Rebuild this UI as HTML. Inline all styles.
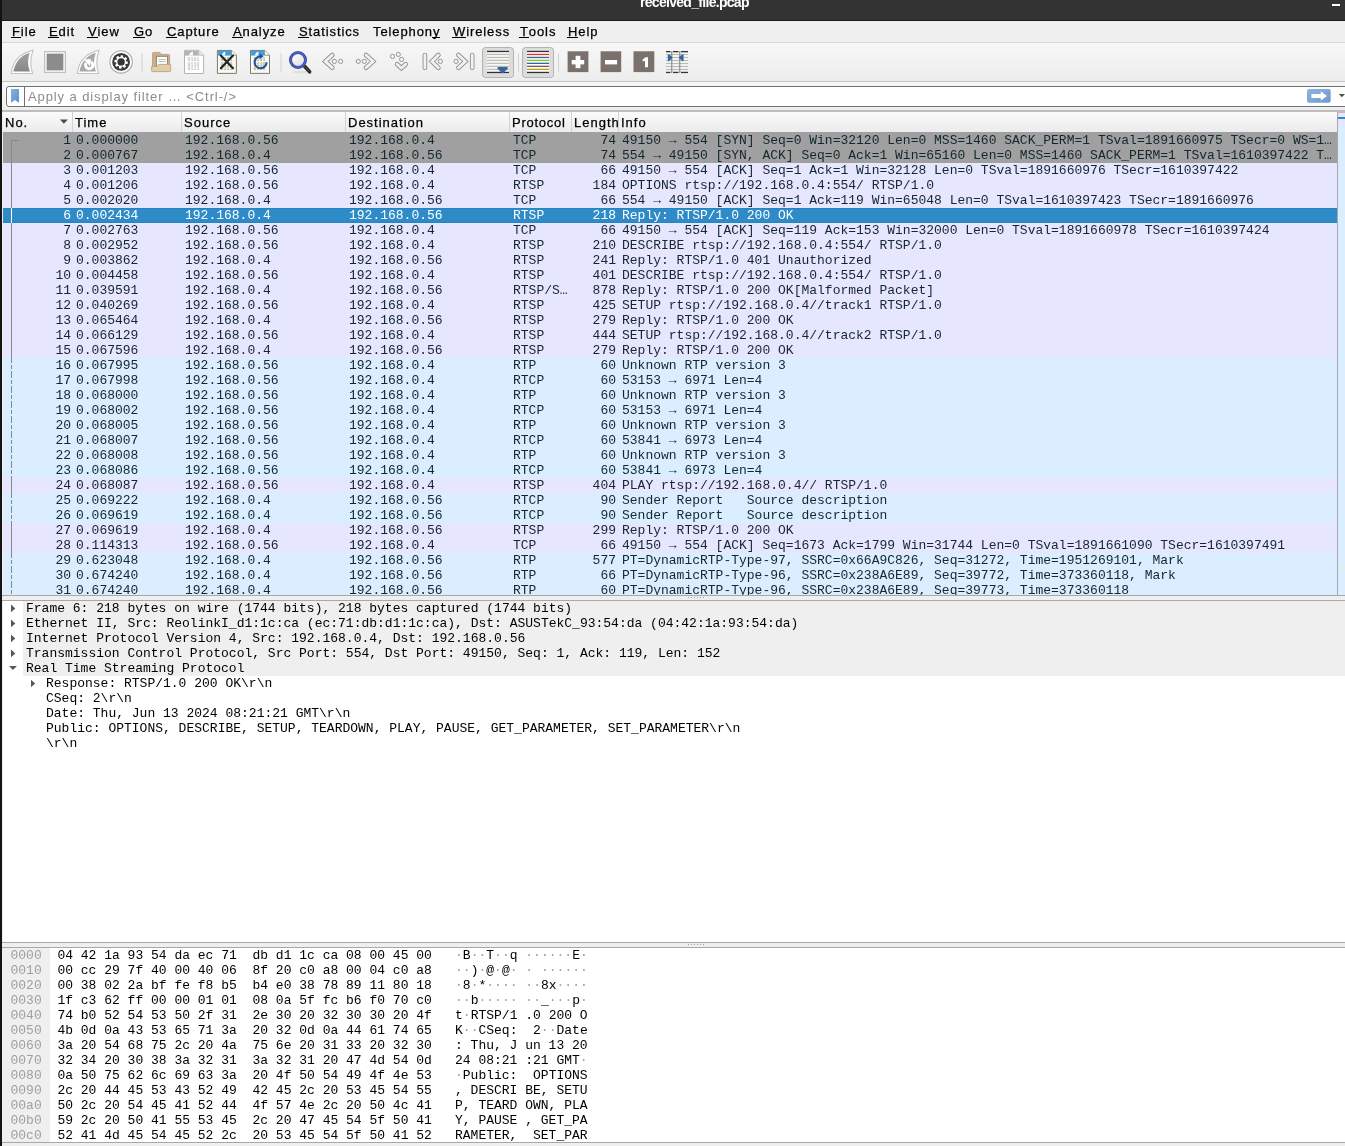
<!DOCTYPE html><html><head><meta charset="utf-8"><style>*{margin:0;padding:0;box-sizing:border-box}
html,body{width:1345px;height:1146px;overflow:hidden;background:#efefef;position:relative;font-family:"Liberation Sans",sans-serif}
.abs{position:absolute}
#lstrip{position:absolute;left:0;top:0;width:2px;height:1146px;background:#141414;z-index:50}
#title{position:absolute;left:0;top:0;width:1345px;height:21px;background:#333333;border-bottom:1px solid #1c1c1c;overflow:hidden}
#title .t{position:absolute;left:640px;top:-6px;font:bold 14px "Liberation Sans",sans-serif;color:#fff;white-space:nowrap;letter-spacing:-0.7px}
#title .mn{position:absolute;left:1332px;top:4px;width:8px;height:2px;background:#fff}
#menu{position:absolute;left:0;top:21px;width:1345px;height:22px;background:#efefef;border-bottom:1px solid #d8d8d8}
#menu span{position:absolute;top:3px;font-size:13px;color:#000;white-space:nowrap;line-height:16px}
#menu u{text-decoration:none;border-bottom:1px solid #000;display:inline-block;line-height:11px;margin-left:-1px;padding-left:1px}
#tb{position:absolute;left:0;top:43px;width:1345px;height:39px;background:linear-gradient(#f7f7f7,#ededed);border-bottom:1px solid #c4c4c4}
#fb{position:absolute;left:0;top:82px;width:1345px;height:28px;background:linear-gradient(#f7f7f7,#eeeeee)}
#fbox{position:absolute;left:6px;top:86px;width:1345px;height:21px;background:#fff;border:1px solid #707070;border-radius:3px}
#fbox .sep{position:absolute;left:17px;top:0;width:1px;height:19px;background:#707070}
#fbox .ph{position:absolute;left:21px;top:2px;font-size:13px;color:#8c8c8c;white-space:nowrap;letter-spacing:0.9px}
#pltop{position:absolute;left:0;top:110px;width:1345px;height:2px;background:#bdbdbd}
#hdr{position:absolute;left:3px;top:112px;width:1334px;height:21px;background:linear-gradient(#fbfbfb,#ebebeb);border-bottom:1px solid #a0a0a0}
#hdr .h{position:absolute;top:0;height:20px;border-right:1px solid #d2d2d2}
#hdr .h span{position:absolute;top:3px;font-size:13px;color:#000;white-space:nowrap}
#pl{position:absolute;left:3px;top:0;width:1334px;height:595px;overflow:hidden}
.pr{position:absolute;left:0;width:1334px;height:15px;font:13px/15px "Liberation Mono",monospace;color:#12272e;white-space:pre}
.pr.syn{background:#a0a0a0}
.pr.tcp{background:#e7e6ff}
.pr.udp{background:#daeeff}
.pr.sel{background:#2f8bc7;color:#fff;border-top:1px solid #2585c2;border-bottom:1px solid #2585c2}
.pr.sel .c{top:-1px}
.pr.sel .rel{top:-1px!important}
.c{position:absolute;top:0}
.no{right:1266px;text-align:right}
.tm{left:73px}
.sr{left:182px}
.ds{left:346px}
.pt{left:510px}
.ln{right:721px;text-align:right}
.inf{left:619px}
#mm{position:absolute;left:1337px;top:112px;width:8px;height:483px;border-left:1px solid #a8a8a8;border-top:1px solid #bdbdbd;background:linear-gradient(to bottom,#e7e6ff 0,#e7e6ff 4px,#2f8bc7 4px,#2f8bc7 6px,#e7e6ff 6px,#e7e6ff 13px,#daeeff 13px,#daeeff 20px,#e3e6ff 20px,#e3e6ff 21px,#daeeff 21px,#daeeff 24px,#e3e6ff 24px,#e3e6ff 25px,#daeeff 25px,#daeeff 453px,#f6e8c0 453px,#f6e8c0 454px,#daeeff 454px)}
#plbot{position:absolute;left:0;top:595px;width:1345px;height:1px;background:#a8a8a8}
#split1{position:absolute;left:0;top:600px;width:1345px;height:1px;background:#a8a8a8}
#det{position:absolute;left:3px;top:601px;width:1342px;height:341px;background:#fff;overflow:hidden}
.dr{position:absolute;left:0;height:15px;font:13px/15px "Liberation Mono",monospace;color:#000;white-space:pre}
.dg{position:absolute;left:20px;top:0;width:1322px;height:75px;background:#efefef}
#split2a{position:absolute;left:0;top:942px;width:1345px;height:1px;background:#a8a8a8}
#split2b{position:absolute;left:0;top:947px;width:1345px;height:1px;background:#a8a8a8}
#hex{position:absolute;left:3px;top:948px;width:1342px;height:194px;background:#fff;overflow:hidden}
#hexbot{position:absolute;left:0;top:1142px;width:1345px;height:1px;background:#a8a8a8}
.hoff{position:absolute;left:0;top:0;width:47px;height:194px;background:#efefef}
.hr{position:absolute;left:0;top:0;height:15px;font:13px/15px "Liberation Mono",monospace;color:#000;white-space:pre}
.ho{position:absolute;left:7.5px;color:#a0a0a0}
.hh{position:absolute;left:54.4px}
.ha{position:absolute;left:452px}
body>*{will-change:transform}
#hdr .h span{letter-spacing:1px}
#menu span{letter-spacing:0.9px}
.rel{position:absolute;left:8px;width:1px;height:15px;background:#7f8a92}
.rel.d{background:repeating-linear-gradient(to bottom,#7f8a92 0 5px,transparent 5px 7px,#7f8a92 7px 11px,transparent 11px 13px,#7f8a92 13px 15px)}
.rel.w{background:#fff}
.ha i{font-style:normal;color:#a0a0a0}
#hdr .h span,#menu span{-webkit-text-stroke:0.25px currentColor}
</style></head><body><div id="lstrip"></div>
<div id="title"><span class="t">received_file.pcap</span><div class="mn"></div></div>
<div id="menu">
<span style="left:12px"><u>F</u>ile</span>
<span style="left:49px"><u>E</u>dit</span>
<span style="left:88px"><u>V</u>iew</span>
<span style="left:134px"><u>G</u>o</span>
<span style="left:167px"><u>C</u>apture</span>
<span style="left:233px"><u>A</u>nalyze</span>
<span style="left:299px"><u>S</u>tatistics</span>
<span style="left:373px">Telephon<u>y</u></span>
<span style="left:453px"><u>W</u>ireless</span>
<span style="left:520px"><u>T</u>ools</span>
<span style="left:568px"><u>H</u>elp</span>
</div>
<div id="tb"></div>
<!--TB--><svg id="tbsvg" style="position:absolute;left:0;top:0" width="700" height="82" viewBox="0 0 700 82">
<defs>
<linearGradient id="fing" x1="0" y1="0" x2="0" y2="1"><stop offset="0" stop-color="#a2a2a2"/><stop offset="1" stop-color="#868686"/></linearGradient>
<linearGradient id="lens" x1="0" y1="0" x2="1" y2="1"><stop offset="0" stop-color="#ffffff"/><stop offset="1" stop-color="#dcdcdc"/></linearGradient>
</defs>
<!-- fin 1 -->
<path d="M11.3,73.5 Q13.5,54.5 33,50.3 Q28.8,62 32.6,73.5 Z" fill="#fff" stroke="#c2c2c2" stroke-width="1.1"/>
<path d="M13.4,71.6 Q16.5,56.5 29.8,52.8 Q26.3,63 29.9,71.6 Z" fill="url(#fing)"/>
<!-- stop -->
<rect x="44.6" y="51.6" width="20.8" height="20.8" fill="#f6f6f6" stroke="#bdbdbd" stroke-width="1.1"/>
<rect x="47" y="54" width="16" height="16" fill="#8c8c8c" stroke="#858585" stroke-width="0.6"/>
<!-- fin 2 restart -->
<path d="M77.3,73.5 Q79.5,54.5 99,50.3 Q94.8,62 98.6,73.5 Z" fill="#fff" stroke="#c2c2c2" stroke-width="1.1"/>
<path d="M79.4,71.6 Q82.5,56.5 95.8,52.8 Q92.3,63 95.9,71.6 Z" fill="#a9a9a9"/>
<path d="M92,62.6 A3.7,3.7 0 1 1 85.6,64" fill="none" stroke="#fff" stroke-width="3" stroke-linecap="round"/>
<path d="M83.8,59.4 L91,59 L90.1,66.4 Z" fill="#fff"/>
<!-- gear -->
<circle cx="121.1" cy="61.9" r="11.2" fill="#fff" stroke="#a8a8a8" stroke-width="1.1"/>
<circle cx="121.1" cy="61.9" r="8.9" fill="#3a3a3a"/>
<g transform="translate(121.1,61.9)" fill="#fff"><circle r="5.0"/><rect x="-1.3" y="-6.7" width="2.6" height="2.6" rx="0.4" transform="rotate(8)"/><rect x="-1.3" y="-6.7" width="2.6" height="2.6" rx="0.4" transform="rotate(53)"/><rect x="-1.3" y="-6.7" width="2.6" height="2.6" rx="0.4" transform="rotate(98)"/><rect x="-1.3" y="-6.7" width="2.6" height="2.6" rx="0.4" transform="rotate(143)"/><rect x="-1.3" y="-6.7" width="2.6" height="2.6" rx="0.4" transform="rotate(188)"/><rect x="-1.3" y="-6.7" width="2.6" height="2.6" rx="0.4" transform="rotate(233)"/><rect x="-1.3" y="-6.7" width="2.6" height="2.6" rx="0.4" transform="rotate(278)"/><rect x="-1.3" y="-6.7" width="2.6" height="2.6" rx="0.4" transform="rotate(323)"/></g>
<circle cx="121.1" cy="61.9" r="3.7" fill="#333"/>
<!-- sep -->
<rect x="141.5" y="53" width="1" height="19" fill="#d2d2d2"/>
<!-- folder -->
<path d="M152.5,71 L152.5,53.5 Q152.5,52.4 153.6,52.4 L159.8,52.4 L161.6,54.4 L168.6,54.4 Q169.6,54.4 169.6,55.4 L169.6,71 Z" fill="#cbb08a" stroke="#bba27c" stroke-width="0.9"/>
<rect x="156.4" y="56.3" width="11" height="11" fill="#fff" stroke="#7b7f7f" stroke-width="0.9"/>
<rect x="158.4" y="59" width="7.4" height="0.9" fill="#b5bab2"/>
<rect x="158.4" y="61" width="7.4" height="0.9" fill="#b5bab2"/>
<path d="M151.6,66.3 L156.8,66.3 L158.8,64.4 L170.6,64.4 L170.6,70.8 Q170.6,71.6 169.8,71.6 L152.4,71.6 Q151.6,71.6 151.6,70.8 Z" fill="#e2cdab" stroke="#bca47e" stroke-width="0.9"/>
<!-- doc grey -->
<path d="M184.5,50.3 L198.8,50.3 L203.6,55.2 L203.6,73.5 L184.5,73.5 Z" fill="#fff" stroke="#b4b4b4" stroke-width="1"/>
<path d="M185,50.8 L198.6,50.8 L198.6,55.6 L185,55.6 Z" fill="#b3b3b3"/>
<path d="M188.8,55.6 Q190,52 193,51.5 L192.8,55.6 Z" fill="#fff"/>
<path d="M198.8,50.3 L198.8,55.2 L203.6,55.2" fill="#e8e8e8" stroke="#b4b4b4" stroke-width="0.8"/>
<g fill="#c4c4c4" font-family="Liberation Mono" font-size="5" font-weight="bold"><text x="187.6" y="60.8">0101</text><text x="187.6" y="65.6">0110</text><text x="187.6" y="70.4">0111</text></g>
<!-- doc X -->
<path d="M217.4,50.4 L231.6,50.4 L236.4,55.2 L236.4,73.4 L217.4,73.4 Z" fill="#fafaee" stroke="#7a7a74" stroke-width="1"/>
<path d="M218,51 L231.4,51 L231.4,55.6 L218,55.6 Z" fill="#3b9fe0"/>
<path d="M221.5,55.6 Q222.6,52.3 225.4,51.6 L225,55.6 Z" fill="#fff"/>
<path d="M231.6,50.4 L231.6,55.2 L236.4,55.2" fill="#fff" stroke="#7a7a74" stroke-width="0.8"/>
<g fill="#a8a8a0" font-family="Liberation Mono" font-size="5" font-weight="bold"><text x="220.6" y="60.8">0101</text><text x="220.6" y="65.6">0110</text><text x="220.6" y="70.4">0111</text></g>
<path d="M220.8,55.6 L233,68.2 M233,55.6 L220.8,68.2" stroke="#252525" stroke-width="2.2" stroke-linecap="round"/>
<!-- doc reload -->
<path d="M250.5,50.4 L264.7,50.4 L269.5,55.2 L269.5,73.4 L250.5,73.4 Z" fill="#fafaee" stroke="#7a7a74" stroke-width="1"/>
<path d="M251.1,51 L264.5,51 L264.5,55.6 L251.1,55.6 Z" fill="#3b9fe0"/>
<path d="M254.6,55.6 Q255.7,52.3 258.5,51.6 L258.1,55.6 Z" fill="#fff"/>
<path d="M264.7,50.4 L264.7,55.2 L269.5,55.2" fill="#fff" stroke="#7a7a74" stroke-width="0.8"/>
<g fill="#a8a8a0" font-family="Liberation Mono" font-size="5" font-weight="bold"><text x="253.6" y="60.8">0101</text><text x="253.6" y="65.6">0110</text><text x="253.6" y="70.4">0111</text></g>
<path d="M266.6,62.3 A6,6 0 1 1 260.3,56.3" fill="none" stroke="#1c4f9c" stroke-width="2"/>
<path d="M259.6,53.4 L263.6,56.2 L259.6,59 Z" fill="#1c4f9c"/>
<!-- sep -->
<rect x="280.5" y="53" width="1" height="19" fill="#d2d2d2"/>
<!-- magnifier -->
<ellipse cx="300" cy="72" rx="8" ry="1.5" fill="#000" opacity="0.06"/>
<path d="M304.6,66.2 L309.6,71.8" stroke="#2a2a2a" stroke-width="3.6" stroke-linecap="round"/>
<path d="M304.9,66.6 L309.2,71.3" stroke="#8a8270" stroke-width="1" stroke-dasharray="0.8 0.8"/>
<circle cx="298" cy="60" r="6.1" fill="url(#lens)"/>
<circle cx="298" cy="60" r="7.5" fill="none" stroke="#2f4ea8" stroke-width="3"/>
<circle cx="298" cy="60" r="7.4" fill="none" stroke="#6a64cc" stroke-width="1"/>
<!-- back / fwd -->
<g fill="none" stroke-linecap="round" stroke-linejoin="miter">
<path d="M332.3,55 L325.3,61.4 L332.3,67.8" stroke="#8e8e8e" stroke-width="4.6"/>
<path d="M366,55 L373.1,61.4 L366,67.8" stroke="#8e8e8e" stroke-width="4.6"/>
<path d="M397.1,64.3 L401.4,68.2 L405.7,64.3" stroke="#8e8e8e" stroke-width="4.6"/>
<path d="M438.4,55 L431.9,61.4 L438.4,67.8" stroke="#8e8e8e" stroke-width="4.6"/>
<path d="M458.4,55 L465.4,61.4 L458.4,67.8" stroke="#8e8e8e" stroke-width="4.6"/>
<path d="M424.9,55 L424.9,67.8" stroke="#8e8e8e" stroke-width="4.6"/>
<path d="M472.2,55 L472.2,67.8" stroke="#8e8e8e" stroke-width="4.6"/>
<path d="M332.3,55 L325.3,61.4 L332.3,67.8" stroke="#f2f2f2" stroke-width="2.8"/>
<path d="M366,55 L373.1,61.4 L366,67.8" stroke="#f2f2f2" stroke-width="2.8"/>
<path d="M397.1,64.3 L401.4,68.2 L405.7,64.3" stroke="#f2f2f2" stroke-width="2.8"/>
<path d="M438.4,55 L431.9,61.4 L438.4,67.8" stroke="#f2f2f2" stroke-width="2.8"/>
<path d="M458.4,55 L465.4,61.4 L458.4,67.8" stroke="#f2f2f2" stroke-width="2.8"/>
<path d="M424.9,55 L424.9,67.8" stroke="#f2f2f2" stroke-width="2.8"/>
<path d="M472.2,55 L472.2,67.8" stroke="#f2f2f2" stroke-width="2.8"/>
</g>
<g fill="#f6f6f6" stroke="#8a8a8a" stroke-width="0.9">
<circle cx="334.4" cy="61.4" r="2.1"/><circle cx="340.6" cy="61.4" r="2.1"/>
<circle cx="358.3" cy="61.4" r="2.1"/><circle cx="364.3" cy="61.4" r="2.1"/>
<circle cx="392.5" cy="56.4" r="2.1"/><circle cx="398.3" cy="54.4" r="2.1"/><circle cx="401.6" cy="59.4" r="2.1"/>
<circle cx="440.4" cy="61.4" r="2.1"/><circle cx="456.1" cy="61.4" r="2.1"/>
</g>
<!-- autoscroll pressed -->
<rect x="482.5" y="47.5" width="31" height="30" rx="3" fill="#dcdcdc" stroke="#b3b3b3" stroke-width="1"/>
<rect x="486.8" y="50.7" width="22.3" height="22.3" fill="#f6f6f4"/>
<g fill="#b9bbb0"><rect x="487" y="53.9" width="22" height="1.1"/><rect x="487" y="56.9" width="22" height="1.1"/><rect x="487" y="59.8" width="22" height="1.1"/><rect x="487" y="62.8" width="22" height="1.1"/><rect x="487" y="65.8" width="22" height="1.1"/><rect x="487" y="68.8" width="22" height="1.1"/></g>
<rect x="487" y="50.8" width="22" height="1.3" fill="#2e3436"/>
<rect x="487" y="71.8" width="22" height="1.3" fill="#2e3436"/>
<path d="M498.3,68.1 L506.9,68.1 L502.6,72.3 Z" fill="#3465a4" stroke="#3465a4" stroke-width="2" stroke-linejoin="round"/>
<rect x="518" y="53" width="1" height="19" fill="#d2d2d2"/>
<!-- colorize pressed -->
<rect x="522.5" y="47.5" width="31" height="30" rx="3" fill="#dcdcdc" stroke="#b3b3b3" stroke-width="1"/>
<rect x="527" y="50.7" width="22.2" height="22.3" fill="#fdfdfa"/>
<rect x="527" y="50.8" width="22" height="1.3" fill="#2e3436"/>
<rect x="527" y="53.8" width="22" height="1.3" fill="#ef2929"/>
<rect x="527" y="56.8" width="22" height="1.3" fill="#3465a4"/>
<rect x="527" y="59.7" width="22" height="1.3" fill="#73d216"/>
<rect x="527" y="62.7" width="22" height="1.3" fill="#3465a4"/>
<rect x="527" y="65.7" width="22" height="1.3" fill="#75507b"/>
<rect x="527" y="68.7" width="22" height="1.3" fill="#c4a000"/>
<rect x="527" y="71.8" width="22" height="1.3" fill="#2e3436"/>
<rect x="558" y="53" width="1" height="19" fill="#d2d2d2"/>
<!-- zoom -->
<rect x="567.6" y="51.3" width="20.8" height="20.8" fill="#7a716c"/>
<rect x="571.7" y="60" width="12.5" height="4.4" fill="#fff"/>
<rect x="575.6" y="55.8" width="4.8" height="12.4" fill="#fff"/>
<rect x="600.6" y="51.3" width="20.6" height="20.8" fill="#7a716c"/>
<rect x="605" y="60" width="12.1" height="4.4" fill="#fff"/>
<rect x="633.5" y="51.3" width="20.8" height="20.8" fill="#7a716c"/>
<path d="M642.6,59.4 L645.6,57.2 L648,57.2 L648,67.2 L645,67.2 L645,60.8 L642.6,61.6 Z" fill="#fff"/>
<!-- resize cols -->
<g fill="#b9bbb0"><rect x="666" y="54" width="22" height="1"/><rect x="666" y="57" width="22" height="1"/><rect x="666" y="60" width="22" height="1"/><rect x="666" y="63" width="22" height="1"/><rect x="666" y="66" width="22" height="1"/><rect x="666" y="69" width="22" height="1"/></g>
<rect x="666" y="51" width="22" height="1.3" fill="#2e3436"/>
<rect x="666" y="71.8" width="22" height="1.3" fill="#2e3436"/>
<g fill="#fafafa"><rect x="670.5" y="50.6" width="2.5" height="1.9"/><rect x="678.5" y="50.6" width="2.5" height="1.9"/><rect x="670.5" y="71.6" width="2.5" height="1.9"/><rect x="678.5" y="71.6" width="2.5" height="1.9"/></g>
<rect x="671.2" y="51" width="1.1" height="22" fill="#888a85"/>
<rect x="679.2" y="51" width="1.1" height="22" fill="#888a85"/>
<path d="M668.6,54.9 L671.8,57.6 L668.6,60.4 Z" fill="#3465a4" stroke="#3465a4" stroke-width="1.5" stroke-linejoin="round"/>
<path d="M682.8,54.9 L679.6,57.6 L682.8,60.4 Z" fill="#3465a4" stroke="#3465a4" stroke-width="1.5" stroke-linejoin="round"/>
</svg>
<!--/TB-->
<div id="fb"></div>
<div id="fbox"><div class="sep"></div><svg style="position:absolute;left:3px;top:1px" width="10" height="16"><defs><linearGradient id="bmg" x1="0" y1="0" x2="1" y2="1"><stop offset="0" stop-color="#86b2e4"/><stop offset="1" stop-color="#5a90cf"/></linearGradient></defs><path d="M1,1 L9,1 L9,14.8 L5,12 L1,14.8 Z" fill="url(#bmg)"/></svg><span class="ph">Apply a display filter … &lt;Ctrl-/&gt;</span></div>
<svg style="position:absolute;left:1300px;top:84px" width="45" height="24"><defs><linearGradient id="apg" x1="0" y1="0" x2="1" y2="1"><stop offset="0" stop-color="#8fb4de"/><stop offset="1" stop-color="#6a9bd0"/></linearGradient></defs>
<rect x="7" y="4.9" width="23.7" height="13.9" rx="2" fill="url(#apg)"/>
<path d="M11.4,9.9 L20.8,9.9 L20.8,7.3 L27,11.9 L20.8,16.4 L20.8,13.9 L11.4,13.9 Z" fill="#fff"/>
<path d="M38.8,10 L45,10 L41.9,13.3 Z" fill="#4e4e4e"/></svg>
<div id="pltop"></div>
<div id="hdr">
<div class="h" style="left:0;width:70px"><span style="left:2px">No.</span><svg style="position:absolute;left:56px;top:6.7px" width="10" height="6"><path d="M1,0.6 L8.8,0.6 L4.9,4.8 Z" fill="#4a4a4a"/></svg></div>
<div class="h" style="left:70px;width:109px"><span style="left:2px">Time</span></div>
<div class="h" style="left:179px;width:164px"><span style="left:2px">Source</span></div>
<div class="h" style="left:343px;width:164px"><span style="left:2px">Destination</span></div>
<div class="h" style="left:507px;width:62px"><span style="left:2px;letter-spacing:0.75px">Protocol</span></div>
<div class="h" style="left:569px;width:47px"><span style="left:2px">Length</span></div>
<div class="h" style="left:616px;width:718px;border-right:0"><span style="left:2px">Info</span></div>
</div>
<div id="mm"></div>
<div id="plbot"></div>
<div id="split1"></div><div id="dots1"><div style="position:absolute;left:688px;top:597px;width:1px;height:1px;background:#a0a0a0"></div><div style="position:absolute;left:691px;top:597px;width:1px;height:1px;background:#a0a0a0"></div><div style="position:absolute;left:694px;top:597px;width:1px;height:1px;background:#a0a0a0"></div><div style="position:absolute;left:697px;top:597px;width:1px;height:1px;background:#a0a0a0"></div><div style="position:absolute;left:700px;top:597px;width:1px;height:1px;background:#a0a0a0"></div><div style="position:absolute;left:703px;top:597px;width:1px;height:1px;background:#a0a0a0"></div></div>
<div id="det">
<div class="dg"></div>
<svg style="position:absolute;left:0;top:0" width="40" height="90" viewBox="3 601 40 90">
<g fill="#585858"><path d="M11,604.6 L15.3,608.4 L11,612.2 Z"/><path d="M11,619.6 L15.3,623.4 L11,627.2 Z"/><path d="M11,634.6 L15.3,638.4 L11,642.2 Z"/><path d="M11,649.6 L15.3,653.4 L11,657.2 Z"/>
<path d="M9,666 L16.9,666 L12.95,670.1 Z"/><path d="M31,679.8 L35.2,683.5 L31,687.2 Z"/></g></svg>
<div class="dr" style="top:0;left:23px">Frame 6: 218 bytes on wire (1744 bits), 218 bytes captured (1744 bits)</div>
<div class="dr" style="top:15px;left:23px">Ethernet II, Src: ReolinkI_d1:1c:ca (ec:71:db:d1:1c:ca), Dst: ASUSTekC_93:54:da (04:42:1a:93:54:da)</div>
<div class="dr" style="top:30px;left:23px">Internet Protocol Version 4, Src: 192.168.0.4, Dst: 192.168.0.56</div>
<div class="dr" style="top:45px;left:23px">Transmission Control Protocol, Src Port: 554, Dst Port: 49150, Seq: 1, Ack: 119, Len: 152</div>
<div class="dr" style="top:60px;left:23px">Real Time Streaming Protocol</div>
<div class="dr" style="top:75px;left:43px">Response: RTSP/1.0 200 OK\r\n</div>
<div class="dr" style="top:90px;left:43px">CSeq: 2\r\n</div>
<div class="dr" style="top:105px;left:43px">Date: Thu, Jun 13 2024 08:21:21 GMT\r\n</div>
<div class="dr" style="top:120px;left:43px">Public: OPTIONS, DESCRIBE, SETUP, TEARDOWN, PLAY, PAUSE, GET_PARAMETER, SET_PARAMETER\r\n</div>
<div class="dr" style="top:135px;left:43px">\r\n</div>
</div>
<div id="split2a"></div>
<div id="split2b"></div><div id="dots2"><div style="position:absolute;left:688px;top:944px;width:1px;height:1px;background:#a0a0a0"></div><div style="position:absolute;left:691px;top:944px;width:1px;height:1px;background:#a0a0a0"></div><div style="position:absolute;left:694px;top:944px;width:1px;height:1px;background:#a0a0a0"></div><div style="position:absolute;left:697px;top:944px;width:1px;height:1px;background:#a0a0a0"></div><div style="position:absolute;left:700px;top:944px;width:1px;height:1px;background:#a0a0a0"></div><div style="position:absolute;left:703px;top:944px;width:1px;height:1px;background:#a0a0a0"></div></div>
<div id="hexbot"></div>
<div id="pl"><div class="pr syn" style="top:133px"><span class="c no">1</span><span class="c tm">0.000000</span><span class="c sr">192.168.0.56</span><span class="c ds">192.168.0.4</span><span class="c pt">TCP</span><span class="c ln">74</span><span class="c inf">49150 → 554 [SYN] Seq=0 Win=32120 Len=0 MSS=1460 SACK_PERM=1 TSval=1891660975 TSecr=0 WS=1…</span><div style="position:absolute;left:8px;top:7px;width:8px;height:8px;border-left:1px solid #7f8a92;border-top:1px solid #7f8a92"></div></div><div class="pr syn" style="top:148px"><span class="c no">2</span><span class="c tm">0.000767</span><span class="c sr">192.168.0.4</span><span class="c ds">192.168.0.56</span><span class="c pt">TCP</span><span class="c ln">74</span><span class="c inf">554 → 49150 [SYN, ACK] Seq=0 Ack=1 Win=65160 Len=0 MSS=1460 SACK_PERM=1 TSval=1610397422 T…</span><div class="rel" style="top:0"></div></div><div class="pr tcp" style="top:163px"><span class="c no">3</span><span class="c tm">0.001203</span><span class="c sr">192.168.0.56</span><span class="c ds">192.168.0.4</span><span class="c pt">TCP</span><span class="c ln">66</span><span class="c inf">49150 → 554 [ACK] Seq=1 Ack=1 Win=32128 Len=0 TSval=1891660976 TSecr=1610397422</span><div class="rel" style="top:0"></div></div><div class="pr tcp" style="top:178px"><span class="c no">4</span><span class="c tm">0.001206</span><span class="c sr">192.168.0.56</span><span class="c ds">192.168.0.4</span><span class="c pt">RTSP</span><span class="c ln">184</span><span class="c inf">OPTIONS rtsp://192.168.0.4:554/ RTSP/1.0</span><div class="rel" style="top:0"></div></div><div class="pr tcp" style="top:193px"><span class="c no">5</span><span class="c tm">0.002020</span><span class="c sr">192.168.0.4</span><span class="c ds">192.168.0.56</span><span class="c pt">TCP</span><span class="c ln">66</span><span class="c inf">554 → 49150 [ACK] Seq=1 Ack=119 Win=65048 Len=0 TSval=1610397423 TSecr=1891660976</span><div class="rel" style="top:0"></div></div><div class="pr sel" style="top:208px"><span class="c no">6</span><span class="c tm">0.002434</span><span class="c sr">192.168.0.4</span><span class="c ds">192.168.0.56</span><span class="c pt">RTSP</span><span class="c ln">218</span><span class="c inf">Reply: RTSP/1.0 200 OK</span><div class="rel w" style="top:0"></div></div><div class="pr tcp" style="top:223px"><span class="c no">7</span><span class="c tm">0.002763</span><span class="c sr">192.168.0.56</span><span class="c ds">192.168.0.4</span><span class="c pt">TCP</span><span class="c ln">66</span><span class="c inf">49150 → 554 [ACK] Seq=119 Ack=153 Win=32000 Len=0 TSval=1891660978 TSecr=1610397424</span><div class="rel" style="top:0"></div></div><div class="pr tcp" style="top:238px"><span class="c no">8</span><span class="c tm">0.002952</span><span class="c sr">192.168.0.56</span><span class="c ds">192.168.0.4</span><span class="c pt">RTSP</span><span class="c ln">210</span><span class="c inf">DESCRIBE rtsp://192.168.0.4:554/ RTSP/1.0</span><div class="rel" style="top:0"></div></div><div class="pr tcp" style="top:253px"><span class="c no">9</span><span class="c tm">0.003862</span><span class="c sr">192.168.0.4</span><span class="c ds">192.168.0.56</span><span class="c pt">RTSP</span><span class="c ln">241</span><span class="c inf">Reply: RTSP/1.0 401 Unauthorized</span><div class="rel" style="top:0"></div></div><div class="pr tcp" style="top:268px"><span class="c no">10</span><span class="c tm">0.004458</span><span class="c sr">192.168.0.56</span><span class="c ds">192.168.0.4</span><span class="c pt">RTSP</span><span class="c ln">401</span><span class="c inf">DESCRIBE rtsp://192.168.0.4:554/ RTSP/1.0</span><div class="rel" style="top:0"></div></div><div class="pr tcp" style="top:283px"><span class="c no">11</span><span class="c tm">0.039591</span><span class="c sr">192.168.0.4</span><span class="c ds">192.168.0.56</span><span class="c pt">RTSP/S…</span><span class="c ln">878</span><span class="c inf">Reply: RTSP/1.0 200 OK[Malformed Packet]</span><div class="rel" style="top:0"></div></div><div class="pr tcp" style="top:298px"><span class="c no">12</span><span class="c tm">0.040269</span><span class="c sr">192.168.0.56</span><span class="c ds">192.168.0.4</span><span class="c pt">RTSP</span><span class="c ln">425</span><span class="c inf">SETUP rtsp://192.168.0.4//track1 RTSP/1.0</span><div class="rel" style="top:0"></div></div><div class="pr tcp" style="top:313px"><span class="c no">13</span><span class="c tm">0.065464</span><span class="c sr">192.168.0.4</span><span class="c ds">192.168.0.56</span><span class="c pt">RTSP</span><span class="c ln">279</span><span class="c inf">Reply: RTSP/1.0 200 OK</span><div class="rel" style="top:0"></div></div><div class="pr tcp" style="top:328px"><span class="c no">14</span><span class="c tm">0.066129</span><span class="c sr">192.168.0.56</span><span class="c ds">192.168.0.4</span><span class="c pt">RTSP</span><span class="c ln">444</span><span class="c inf">SETUP rtsp://192.168.0.4//track2 RTSP/1.0</span><div class="rel" style="top:0"></div></div><div class="pr tcp" style="top:343px"><span class="c no">15</span><span class="c tm">0.067596</span><span class="c sr">192.168.0.4</span><span class="c ds">192.168.0.56</span><span class="c pt">RTSP</span><span class="c ln">279</span><span class="c inf">Reply: RTSP/1.0 200 OK</span><div class="rel" style="top:0"></div></div><div class="pr udp" style="top:358px"><span class="c no">16</span><span class="c tm">0.067995</span><span class="c sr">192.168.0.56</span><span class="c ds">192.168.0.4</span><span class="c pt">RTP</span><span class="c ln">60</span><span class="c inf">Unknown RTP version 3</span><div class="rel d" style="top:0"></div></div><div class="pr udp" style="top:373px"><span class="c no">17</span><span class="c tm">0.067998</span><span class="c sr">192.168.0.56</span><span class="c ds">192.168.0.4</span><span class="c pt">RTCP</span><span class="c ln">60</span><span class="c inf">53153 → 6971 Len=4</span><div class="rel d" style="top:0"></div></div><div class="pr udp" style="top:388px"><span class="c no">18</span><span class="c tm">0.068000</span><span class="c sr">192.168.0.56</span><span class="c ds">192.168.0.4</span><span class="c pt">RTP</span><span class="c ln">60</span><span class="c inf">Unknown RTP version 3</span><div class="rel d" style="top:0"></div></div><div class="pr udp" style="top:403px"><span class="c no">19</span><span class="c tm">0.068002</span><span class="c sr">192.168.0.56</span><span class="c ds">192.168.0.4</span><span class="c pt">RTCP</span><span class="c ln">60</span><span class="c inf">53153 → 6971 Len=4</span><div class="rel d" style="top:0"></div></div><div class="pr udp" style="top:418px"><span class="c no">20</span><span class="c tm">0.068005</span><span class="c sr">192.168.0.56</span><span class="c ds">192.168.0.4</span><span class="c pt">RTP</span><span class="c ln">60</span><span class="c inf">Unknown RTP version 3</span><div class="rel d" style="top:0"></div></div><div class="pr udp" style="top:433px"><span class="c no">21</span><span class="c tm">0.068007</span><span class="c sr">192.168.0.56</span><span class="c ds">192.168.0.4</span><span class="c pt">RTCP</span><span class="c ln">60</span><span class="c inf">53841 → 6973 Len=4</span><div class="rel d" style="top:0"></div></div><div class="pr udp" style="top:448px"><span class="c no">22</span><span class="c tm">0.068008</span><span class="c sr">192.168.0.56</span><span class="c ds">192.168.0.4</span><span class="c pt">RTP</span><span class="c ln">60</span><span class="c inf">Unknown RTP version 3</span><div class="rel d" style="top:0"></div></div><div class="pr udp" style="top:463px"><span class="c no">23</span><span class="c tm">0.068086</span><span class="c sr">192.168.0.56</span><span class="c ds">192.168.0.4</span><span class="c pt">RTCP</span><span class="c ln">60</span><span class="c inf">53841 → 6973 Len=4</span><div class="rel d" style="top:0"></div></div><div class="pr tcp" style="top:478px"><span class="c no">24</span><span class="c tm">0.068087</span><span class="c sr">192.168.0.56</span><span class="c ds">192.168.0.4</span><span class="c pt">RTSP</span><span class="c ln">404</span><span class="c inf">PLAY rtsp://192.168.0.4// RTSP/1.0</span><div class="rel" style="top:0"></div></div><div class="pr udp" style="top:493px"><span class="c no">25</span><span class="c tm">0.069222</span><span class="c sr">192.168.0.4</span><span class="c ds">192.168.0.56</span><span class="c pt">RTCP</span><span class="c ln">90</span><span class="c inf">Sender Report   Source description</span><div class="rel d" style="top:0"></div></div><div class="pr udp" style="top:508px"><span class="c no">26</span><span class="c tm">0.069619</span><span class="c sr">192.168.0.4</span><span class="c ds">192.168.0.56</span><span class="c pt">RTCP</span><span class="c ln">90</span><span class="c inf">Sender Report   Source description</span><div class="rel d" style="top:0"></div></div><div class="pr tcp" style="top:523px"><span class="c no">27</span><span class="c tm">0.069619</span><span class="c sr">192.168.0.4</span><span class="c ds">192.168.0.56</span><span class="c pt">RTSP</span><span class="c ln">299</span><span class="c inf">Reply: RTSP/1.0 200 OK</span><div class="rel" style="top:0"></div></div><div class="pr tcp" style="top:538px"><span class="c no">28</span><span class="c tm">0.114313</span><span class="c sr">192.168.0.56</span><span class="c ds">192.168.0.4</span><span class="c pt">TCP</span><span class="c ln">66</span><span class="c inf">49150 → 554 [ACK] Seq=1673 Ack=1799 Win=31744 Len=0 TSval=1891661090 TSecr=1610397491</span><div class="rel" style="top:0"></div></div><div class="pr udp" style="top:553px"><span class="c no">29</span><span class="c tm">0.623048</span><span class="c sr">192.168.0.4</span><span class="c ds">192.168.0.56</span><span class="c pt">RTP</span><span class="c ln">577</span><span class="c inf">PT=DynamicRTP-Type-97, SSRC=0x66A9C826, Seq=31272, Time=1951269101, Mark</span><div class="rel d" style="top:0"></div></div><div class="pr udp" style="top:568px"><span class="c no">30</span><span class="c tm">0.674240</span><span class="c sr">192.168.0.4</span><span class="c ds">192.168.0.56</span><span class="c pt">RTP</span><span class="c ln">66</span><span class="c inf">PT=DynamicRTP-Type-96, SSRC=0x238A6E89, Seq=39772, Time=373360118, Mark</span><div class="rel d" style="top:0"></div></div><div class="pr udp" style="top:583px"><span class="c no">31</span><span class="c tm">0.674240</span><span class="c sr">192.168.0.4</span><span class="c ds">192.168.0.56</span><span class="c pt">RTP</span><span class="c ln">60</span><span class="c inf">PT=DynamicRTP-Type-96, SSRC=0x238A6E89, Seq=39773, Time=373360118</span><div class="rel d" style="top:0"></div></div></div><div id="hex"><div class="hoff"></div><div class="hr" style="top:0px"><span class="ho">0000</span><span class="hh">04 42 1a 93 54 da ec 71  db d1 1c ca 08 00 45 00</span><span class="ha"><i>·</i>B<i>·</i><i>·</i>T<i>·</i><i>·</i>q <i>·</i><i>·</i><i>·</i><i>·</i><i>·</i><i>·</i>E<i>·</i></span></div><div class="hr" style="top:15px"><span class="ho">0010</span><span class="hh">00 cc 29 7f 40 00 40 06  8f 20 c0 a8 00 04 c0 a8</span><span class="ha"><i>·</i><i>·</i>)<i>·</i>@<i>·</i>@<i>·</i> <i>·</i> <i>·</i><i>·</i><i>·</i><i>·</i><i>·</i><i>·</i></span></div><div class="hr" style="top:30px"><span class="ho">0020</span><span class="hh">00 38 02 2a bf fe f8 b5  b4 e0 38 78 89 11 80 18</span><span class="ha"><i>·</i>8<i>·</i>*<i>·</i><i>·</i><i>·</i><i>·</i> <i>·</i><i>·</i>8x<i>·</i><i>·</i><i>·</i><i>·</i></span></div><div class="hr" style="top:45px"><span class="ho">0030</span><span class="hh">1f c3 62 ff 00 00 01 01  08 0a 5f fc b6 f0 70 c0</span><span class="ha"><i>·</i><i>·</i>b<i>·</i><i>·</i><i>·</i><i>·</i><i>·</i> <i>·</i><i>·</i>_<i>·</i><i>·</i><i>·</i>p<i>·</i></span></div><div class="hr" style="top:60px"><span class="ho">0040</span><span class="hh">74 b0 52 54 53 50 2f 31  2e 30 20 32 30 30 20 4f</span><span class="ha">t<i>·</i>RTSP/1 .0 200 O</span></div><div class="hr" style="top:75px"><span class="ho">0050</span><span class="hh">4b 0d 0a 43 53 65 71 3a  20 32 0d 0a 44 61 74 65</span><span class="ha">K<i>·</i><i>·</i>CSeq:  2<i>·</i><i>·</i>Date</span></div><div class="hr" style="top:90px"><span class="ho">0060</span><span class="hh">3a 20 54 68 75 2c 20 4a  75 6e 20 31 33 20 32 30</span><span class="ha">: Thu, J un 13 20</span></div><div class="hr" style="top:105px"><span class="ho">0070</span><span class="hh">32 34 20 30 38 3a 32 31  3a 32 31 20 47 4d 54 0d</span><span class="ha">24 08:21 :21 GMT<i>·</i></span></div><div class="hr" style="top:120px"><span class="ho">0080</span><span class="hh">0a 50 75 62 6c 69 63 3a  20 4f 50 54 49 4f 4e 53</span><span class="ha"><i>·</i>Public:  OPTIONS</span></div><div class="hr" style="top:135px"><span class="ho">0090</span><span class="hh">2c 20 44 45 53 43 52 49  42 45 2c 20 53 45 54 55</span><span class="ha">, DESCRI BE, SETU</span></div><div class="hr" style="top:150px"><span class="ho">00a0</span><span class="hh">50 2c 20 54 45 41 52 44  4f 57 4e 2c 20 50 4c 41</span><span class="ha">P, TEARD OWN, PLA</span></div><div class="hr" style="top:165px"><span class="ho">00b0</span><span class="hh">59 2c 20 50 41 55 53 45  2c 20 47 45 54 5f 50 41</span><span class="ha">Y, PAUSE , GET_PA</span></div><div class="hr" style="top:180px"><span class="ho">00c0</span><span class="hh">52 41 4d 45 54 45 52 2c  20 53 45 54 5f 50 41 52</span><span class="ha">RAMETER,  SET_PAR</span></div></div></body></html>
